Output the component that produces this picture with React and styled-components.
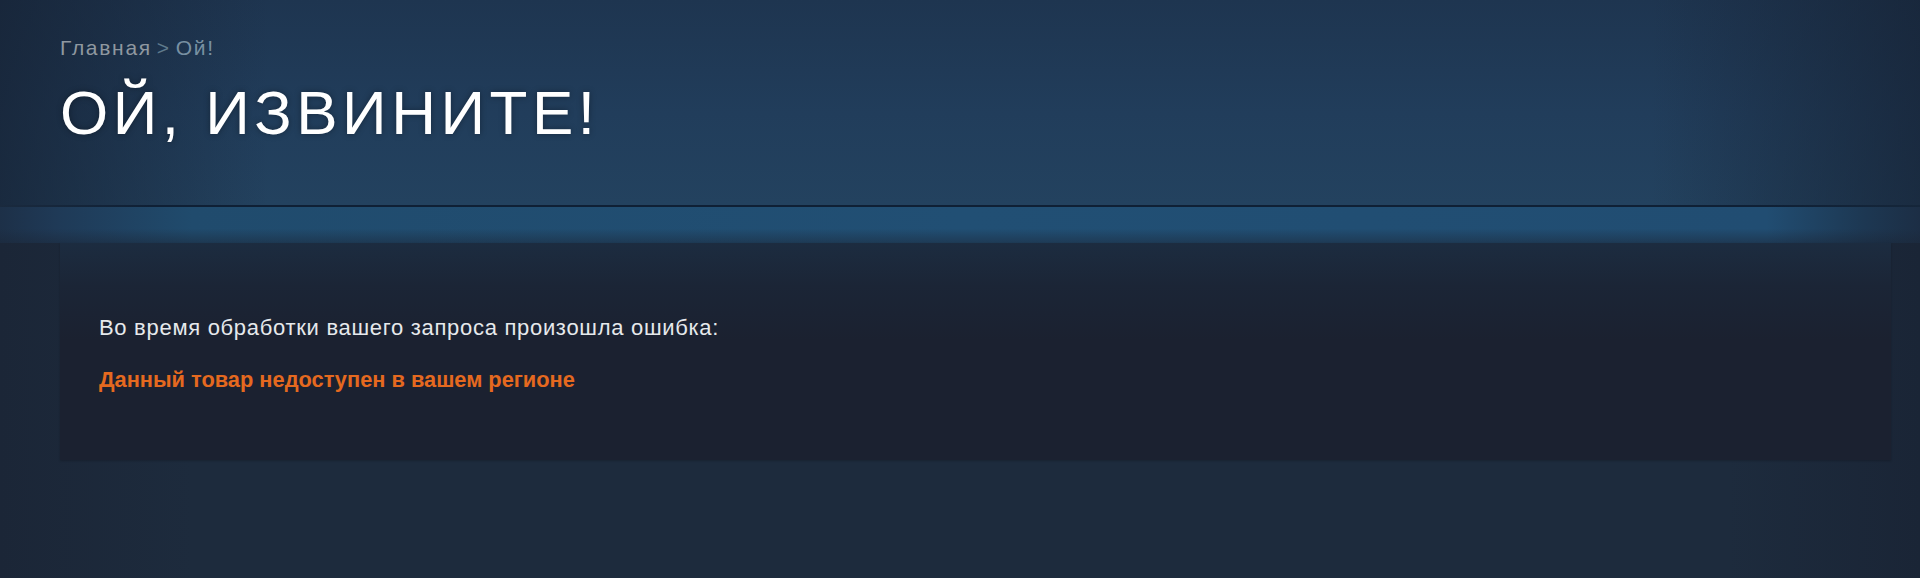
import styled, { createGlobalStyle } from 'styled-components'

const GlobalStyle = createGlobalStyle`
  html, body {
    margin: 0;
    padding: 0;
    background: #1c2939;
  }
  body {
    font-family: "Liberation Sans", Arial, sans-serif;
    overflow: hidden;
  }
`

const Page = styled.div`
  width: 1920px;
  height: 578px;
  background: linear-gradient(90deg, #1b2637 0%, #1d2b3d 10%, #1d2b3d 90%, #1a2536 100%);
`

const Header = styled.header`
  box-sizing: border-box;
  height: 205px;
  padding: 36px 60px 0;
  background:
    linear-gradient(90deg, rgba(22, 34, 52, 0.75) 0%, rgba(22, 34, 52, 0) 14%, rgba(22, 34, 52, 0) 86%, rgba(22, 34, 52, 0.7) 100%),
    linear-gradient(180deg, #1e3550 0%, #213d5b 55%, #23425f 100%);
`

const Breadcrumbs = styled.div`
  font-size: 21px;
  line-height: 24px;
  letter-spacing: 1.7px;
  color: #8f98a0;

  span {
    color: #5f7a8c;
    margin: 0 5px;
  }

  em {
    font-style: normal;
    color: #7890a2;
  }
`

const Title = styled.h1`
  margin: 22px 0 0;
  font-size: 62px;
  line-height: 62px;
  font-weight: normal;
  color: #ffffff;
  letter-spacing: 4.5px;
  text-transform: uppercase;
  text-shadow: 0 0 6px rgba(0, 0, 0, 0.35);
`

const Divider = styled.div`
  height: 2px;
  background: linear-gradient(90deg, #1a2a3e 0%, #0f2035 8%, #0f2035 92%, #15263a 100%);
`

const GlowBand = styled.div`
  height: 36px;
  background:
    linear-gradient(180deg, rgba(0, 0, 0, 0) 0%, rgba(0, 0, 0, 0) 60%, rgba(27, 38, 55, 0.5) 100%),
    linear-gradient(90deg, #1d3048 0%, #1f3a57 3%, #204b6d 10%, #214f74 50%, #214d72 92%, #1d3853 97%, #1c2e45 100%);
`

const Panel = styled.section`
  box-sizing: border-box;
  height: 217px;
  margin: 0 29px 0 60px;
  padding: 72px 39px 0;
  background: linear-gradient(180deg, #1c2c40 0%, #1b2536 20%, #1b2130 45%, #1b2130 100%);
  box-shadow: 0 1px 2px rgba(0, 0, 0, 0.2);
`

const Message = styled.p`
  margin: 0;
  font-size: ${({ $error }) => ($error ? '21.8px' : '22px')};
  line-height: 26px;
  letter-spacing: ${({ $error }) => ($error ? '0' : '0.7px')};
  color: ${({ $error }) => ($error ? '#e5691f' : '#e6e9ec')};
  font-weight: ${({ $error }) => ($error ? 'bold' : 'normal')};
  & + & {
    margin-top: 26px;
  }
`

const App = () => {
  return (
    <>
      <GlobalStyle />
      <Page>
        <Header>
          <Breadcrumbs>
            Главная<span>&gt;</span><em>Ой!</em>
          </Breadcrumbs>
          <Title>Ой, извините!</Title>
        </Header>
        <Divider />
        <GlowBand />
        <Panel>
          <Message>Во время обработки вашего запроса произошла ошибка:</Message>
          <Message $error>Данный товар недоступен в вашем регионе</Message>
        </Panel>
      </Page>
    </>
  )
}

export default App
